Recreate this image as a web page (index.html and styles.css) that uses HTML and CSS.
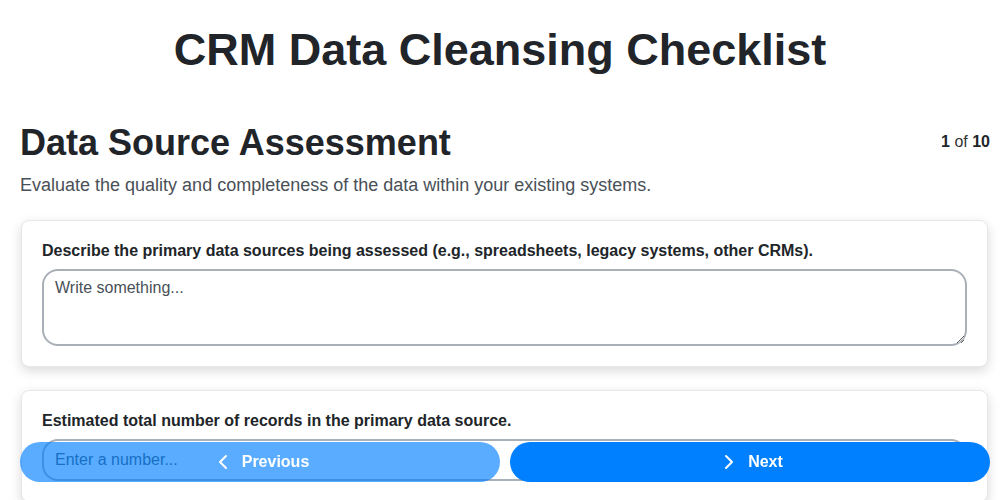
FILE: index.html
```html
<!DOCTYPE html>
<html>
<head>
<meta charset="utf-8">
<link rel="stylesheet" href="styles.css">
</head>
<body>
<header class="header">
  <h1 class="title">CRM Data Cleansing Checklist</h1>
</header>
<div class="page">
  <div class="section-head">
    <h2 class="section-title">Data Source Assessment</h2>
    <div class="counter"><b>1</b> of <b>10</b></div>
  </div>
  <p class="section-desc">Evaluate the quality and completeness of the data within your existing systems.</p>
  <div class="card">
    <label class="label">Describe the primary data sources being assessed (e.g., spreadsheets, legacy systems, other CRMs).</label>
    <textarea class="textarea" placeholder="Write something..."></textarea>
  </div>
  <div class="card">
    <label class="label">Estimated total number of records in the primary data source.</label>
    <input class="input" type="text" placeholder="Enter a number...">
  </div>
</div>
<div class="nav">
  <button class="btn btn-prev"><svg class="chev" viewBox="0 0 24 24" width="24" height="24"><path d="M15 6l-6 6 6 6" fill="none" stroke="currentColor" stroke-width="2" stroke-linecap="round" stroke-linejoin="round"/></svg>Previous</button>
  <button class="btn btn-next"><svg class="chev" viewBox="0 0 24 24" width="24" height="24"><path d="M9 6l6 6-6 6" fill="none" stroke="currentColor" stroke-width="2" stroke-linecap="round" stroke-linejoin="round"/></svg>Next</button>
</div>
</body>
</html>
```
FILE: styles.css
```css
* { box-sizing: border-box; }
html, body { margin: 0; padding: 0; background: #fff; }
body { font-family: "Liberation Sans", Arial, sans-serif; color: #222; }
.header { padding: 24px 20px 0 20px; }
.title { margin: 0; text-align: center; font-size: 45px; font-weight: 700; line-height: 52px; color: #212529; }
.page { padding: 0 10px 0 20px; }
.section-head { display: flex; justify-content: space-between; align-items: flex-start; margin-top: 47px; }
.section-title { margin: 0; font-size: 36px; font-weight: 700; line-height: 40px; color: #212529; }
.counter { font-size: 16px; padding-top: 10px; color: #333; }
.counter b { color: #212529; }
.section-desc { margin: 11px 0 24px 0; font-size: 18px; color: #495057; line-height: 22px; }
.card { margin: 0 2px 23px 1px; padding: 20px; border: 1px solid #e5e7eb; border-radius: 8px; background: #fff; box-shadow: 0 4px 12px rgba(0,0,0,0.15); }
.label { display: block; font-size: 16px; font-weight: 700; color: #212529; margin-bottom: 9px; line-height: 19px; }
.textarea { display: block; width: 100%; height: 77px; border: 2px solid #aab0b8; border-radius: 16px; padding: 8px 11px; font-family: "Liberation Sans", Arial, sans-serif; font-size: 16px; resize: vertical; }
.textarea::placeholder, .input::placeholder { color: #495057; opacity: 1; }
.input { display: block; width: 100%; height: 42px; border: 2px solid #aab0b8; border-radius: 16px; padding: 8px 11px; font-family: "Liberation Sans", Arial, sans-serif; font-size: 16px; }
.nav { position: fixed; left: 20px; right: 10px; bottom: 18px; display: flex; gap: 10px; }
.btn { flex: 1; height: 40px; border: none; border-radius: 20px; color: #fff; font-family: "Liberation Sans", Arial, sans-serif; font-size: 16px; font-weight: 700; display: flex; align-items: center; justify-content: center; gap: 7px; padding: 0; }
.btn-prev { background: rgba(0,128,255,0.65); }
.btn-next { background: #0080ff; }
.chev { display: block; }
```
